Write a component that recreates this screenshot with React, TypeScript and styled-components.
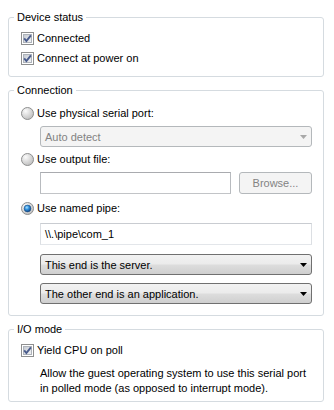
import React from "react";
import styled, { createGlobalStyle } from "styled-components";

const Global = createGlobalStyle`
  html, body { margin: 0; padding: 0; background: #ffffff; }
  body {
    font-family: "Liberation Sans", Arial, sans-serif;
    font-size: 11px;
    color: #000000;
  }
`;

const Page = styled.div`
  width: 334px;
  height: 410px;
  box-sizing: border-box;
  padding: 9px 10px 0 8px;
  display: flex;
  flex-direction: column;
  gap: 5px;
`;

const Group = styled.fieldset<{ $pt: number; $pb: number }>`
  margin: 0;
  min-width: 0;
  border: 1px solid #d5dbe0;
  border-radius: 3px;
  padding: ${(p) => p.$pt}px 11px ${(p) => p.$pb}px 5px;
  display: flex;
  flex-direction: column;
`;

const Legend = styled.legend`
  padding: 0 3px;
  line-height: 16px;
  font-size: 11px;
`;

const Body = styled.div`
  display: flex;
  flex-direction: column;
  padding-left: 7px;
`;

const OptionRow = styled.label<{ $mt?: number }>`
  display: flex;
  align-items: center;
  height: 20px;
  gap: 3px;
  margin-top: ${(p) => p.$mt ?? 0}px;
  white-space: nowrap;
`;

const Indented = styled.div<{ $mt?: number }>`
  margin-left: 19px;
  margin-top: ${(p) => p.$mt ?? 0}px;
  display: flex;
  gap: 8px;
`;

const Combo = styled.div<{ $disabled?: boolean }>`
  flex: 1;
  height: 21px;
  box-sizing: border-box;
  display: flex;
  align-items: center;
  justify-content: space-between;
  padding: 0 4px 0 4px;
  border-radius: 3px;
  border: 1px solid ${(p) => (p.$disabled ? "#b4b8bb" : "#707070")};
  color: ${(p) => (p.$disabled ? "#838383" : "#000000")};
  background: ${(p) =>
    p.$disabled
      ? "#f4f4f4"
      : "linear-gradient(#f2f2f2 0%, #ebebeb 48%, #dddddd 52%, #cfcfcf 100%)"};
  white-space: nowrap;
`;

const TextBox = styled.div<{ $light?: boolean }>`
  flex: 1;
  height: 22px;
  box-sizing: border-box;
  display: flex;
  align-items: center;
  padding: 0 4px;
  background: #ffffff;
  border: 1px solid;
  border-color: ${(p) =>
    p.$light ? "#c9ccd1 #dcdfe3 #e3e6ea #dcdfe3" : "#a9abaf #b8bbbf #c2c4c7 #b8bbbf"};
  white-space: nowrap;
`;

const Button = styled.div`
  width: 73px;
  height: 22px;
  box-sizing: border-box;
  display: flex;
  align-items: center;
  justify-content: center;
  border: 1px solid #b4b8bb;
  border-radius: 3px;
  background: #f4f4f4;
  color: #838383;
`;

const Description = styled.div`
  margin: 6px 0 0 19px;
  line-height: 15px;
  white-space: nowrap;
`;

const IconBox = styled.span`
  display: inline-flex;
  width: 13px;
  height: 13px;
  flex: none;
`;

const CheckBox = () => (
  <IconBox>
    <svg width="13" height="13" viewBox="0 0 13 13">
      <defs>
        <linearGradient id="cbInner" x1="0" y1="0" x2="1" y2="1">
          <stop offset="0" stopColor="#c3c8d0" />
          <stop offset="1" stopColor="#f4f5f7" />
        </linearGradient>
      </defs>
      <rect x="0.5" y="0.5" width="12" height="12" fill="#ffffff" stroke="#8e8f8f" />
      <rect x="2.5" y="2.5" width="8" height="8" fill="url(#cbInner)" stroke="#aeb3ba" />
      <path d="M3.2 6.4 L5.4 9 L9.9 3.3" fill="none" stroke="#4a5c8c" strokeWidth="1.9" />
    </svg>
  </IconBox>
);

const Radio = ({ checked }: { checked?: boolean }) => (
  <IconBox>
    <svg width="13" height="13" viewBox="0 0 13 13">
      <defs>
        <radialGradient id="rdBody" cx="0.35" cy="0.3" r="0.75">
          <stop offset="0" stopColor="#fbfbfb" />
          <stop offset="1" stopColor="#bdbdbd" />
        </radialGradient>
        <radialGradient id="rdDot" cx="0.4" cy="0.35" r="0.7">
          <stop offset="0" stopColor="#a8e2ff" />
          <stop offset="0.45" stopColor="#2f8fdc" />
          <stop offset="1" stopColor="#0c3c78" />
        </radialGradient>
      </defs>
      <circle cx="6.5" cy="6.5" r="6" fill="url(#rdBody)" stroke="#8e8f8f" />
      {checked && <circle cx="6.5" cy="6.5" r="3.4" fill="url(#rdDot)" stroke="#1c4f86" strokeWidth="0.6" />}
    </svg>
  </IconBox>
);

const Arrow = ({ color }: { color: string }) => (
  <svg width="7" height="4" viewBox="0 0 7 4">
    <path d="M0 0H7L3.5 4Z" fill={color} />
  </svg>
);

export default function App() {
  return (
    <>
      <Global />
      <Page>
        <Group $pt={3} $pb={8}>
          <Legend>Device status</Legend>
          <Body>
            <OptionRow>
              <CheckBox />
              Connected
            </OptionRow>
            <OptionRow>
              <CheckBox />
              Connect at power on
            </OptionRow>
          </Body>
        </Group>

        <Group $pt={5} $pb={11}>
          <Legend>Connection</Legend>
          <Body>
            <OptionRow>
              <Radio />
              Use physical serial port:
            </OptionRow>
            <Indented $mt={3}>
              <Combo $disabled>
                Auto detect
                <Arrow color="#a8a8a8" />
              </Combo>
            </Indented>
            <OptionRow $mt={2}>
              <Radio />
              Use output file:
            </OptionRow>
            <Indented $mt={3}>
              <TextBox />
              <Button>Browse...</Button>
            </Indented>
            <OptionRow $mt={4}>
              <Radio checked />
              Use named pipe:
            </OptionRow>
            <Indented $mt={5}>
              <TextBox $light>\\.\pipe\com_1</TextBox>
            </Indented>
            <Indented $mt={9}>
              <Combo>
                This end is the server.
                <Arrow color="#000000" />
              </Combo>
            </Indented>
            <Indented $mt={8}>
              <Combo>
                The other end is an application.
                <Arrow color="#000000" />
              </Combo>
            </Indented>
          </Body>
        </Group>

        <Group $pt={3} $pb={5}>
          <Legend>I/O mode</Legend>
          <Body>
            <OptionRow>
              <CheckBox />
              Yield CPU on poll
            </OptionRow>
            <Description>
              Allow the guest operating system to use this serial port
              <br />
              in polled mode (as opposed to interrupt mode).
            </Description>
          </Body>
        </Group>
      </Page>
    </>
  );
}
